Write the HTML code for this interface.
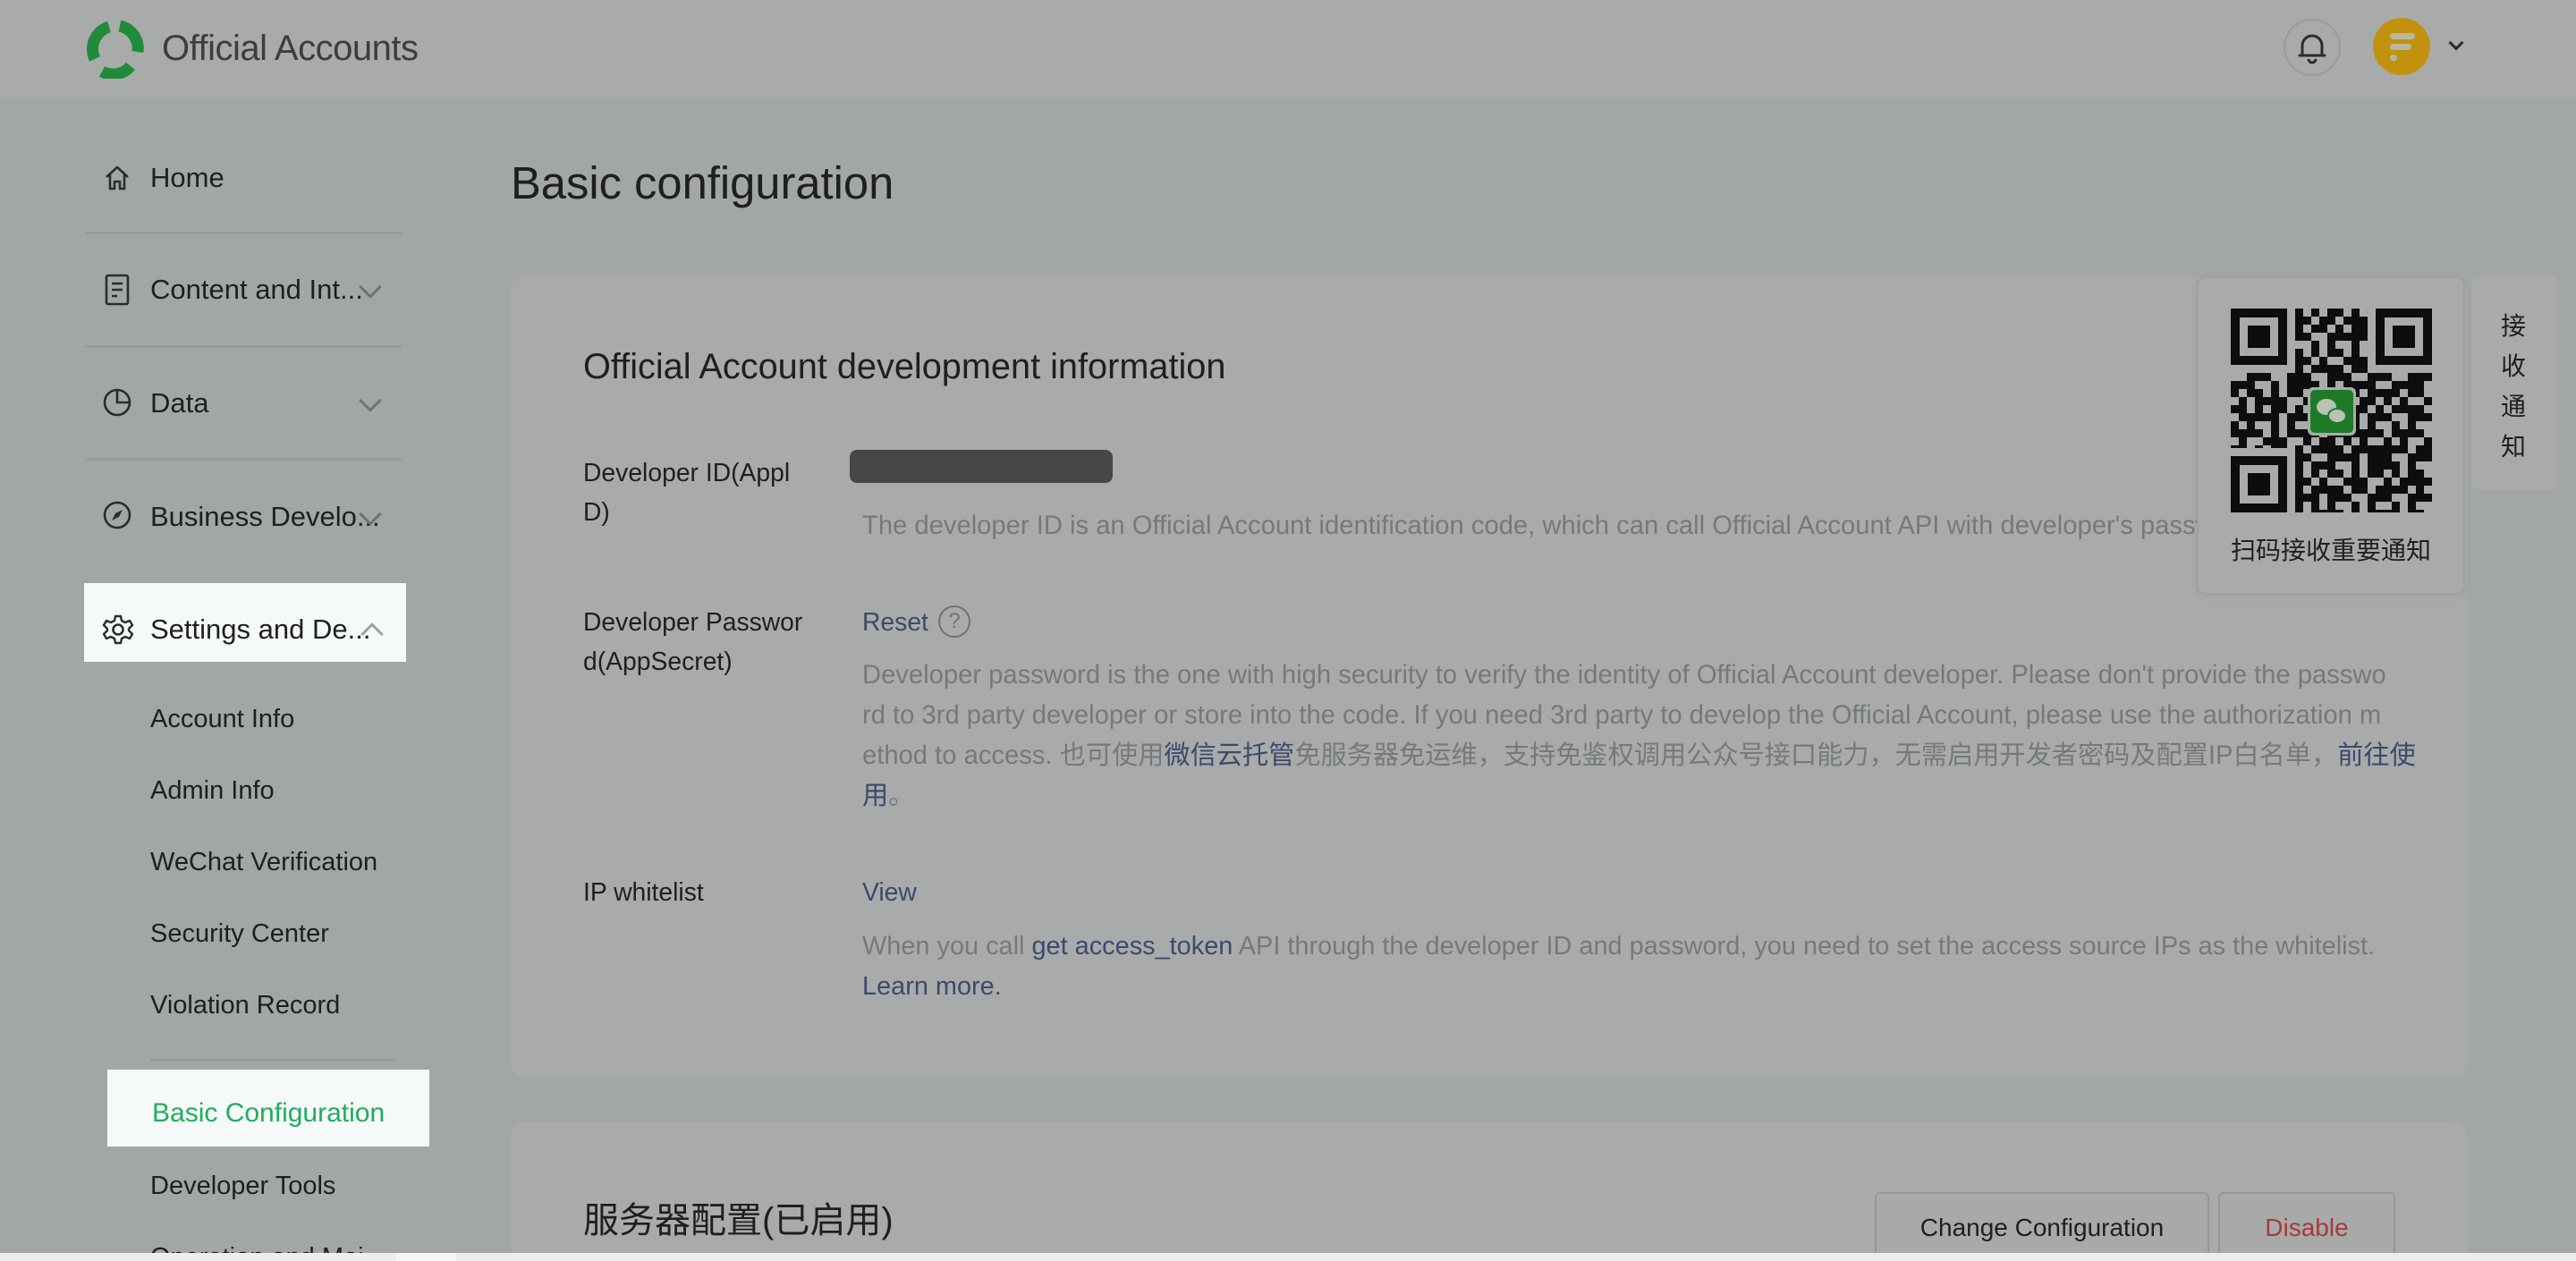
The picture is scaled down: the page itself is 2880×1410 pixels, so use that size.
<!DOCTYPE html>
<html style="width:2880px;height:1410px;overflow:hidden"><head><meta charset="utf-8">
<style>
*{margin:0;padding:0;box-sizing:border-box}
body{width:2880px;height:1410px;overflow:hidden;background:#a2a6a7;font-family:"Liberation Sans","Noto Sans CJK SC",sans-serif;color:#1e1f1f;position:relative}
.abs{position:absolute;white-space:nowrap}
.hdr{position:absolute;left:0;top:0;width:2880px;height:110px;background:#a9abaa}
.side{font-size:31px;line-height:1}
.sub{font-size:29px;line-height:1}
.div{position:absolute;height:3px;background:#979b9c}
.card{position:absolute;background:#a9abab;border-radius:16px}
.lbl{font-size:28.3px;line-height:44px}
.desc{font-size:29.2px;line-height:45px;color:#75797a}
.lnk{color:#3a4a6b}
.chev{position:absolute;width:18px;height:18px;border-right:3px solid #6f7374;border-bottom:3px solid #6f7374;transform:rotate(45deg)}
</style></head><body>
<div class="hdr"></div>
<svg class="abs" style="left:92px;top:20px" width="72" height="68" viewBox="0 0 72 68">
<g fill="none" stroke="#1f8b3b" stroke-width="13">
<path d="M14 46 A26 26 0 0 1 30 10"/>
<path d="M42 9 A26 26 0 0 1 62 38"/>
<path d="M54 54 A26 26 0 0 1 22 60"/>
</g></svg>
<div class="abs" style="left:181px;top:32px;font-size:40px;color:#3c3e3e;letter-spacing:-0.5px">Official Accounts</div>
<div class="abs" style="left:2553px;top:21px;width:64px;height:64px;border:2px solid #999c9c;border-radius:50%"></div>
<svg class="abs" style="left:2568px;top:34px" width="34" height="38" viewBox="0 0 34 38"><path d="M6 28 V17 A11 11 0 0 1 28 17 V28 H31 H3 Z M13 32 A4 4 0 0 0 21 32" fill="none" stroke="#2b2c2c" stroke-width="3" stroke-linejoin="round"/></svg>
<div class="abs" style="left:2653px;top:20px;width:64px;height:64px;border-radius:50%;background:#c2920f"></div>
<div class="abs" style="left:2672px;top:37px;width:28px;height:7px;border-radius:4px;background:#b8b89f"></div>
<div class="abs" style="left:2672px;top:49px;width:24px;height:7px;border-radius:4px;background:#b8b89f"></div>
<div class="abs" style="left:2672px;top:61px;width:8px;height:7px;border-radius:4px;background:#b8b89f"></div>
<div class="chev" style="left:2740px;top:42px;width:12px;height:12px;border-color:#2b2c2c"></div>

<svg class="abs" style="left:115px;top:183px" width="32" height="32" viewBox="0 0 32 32"><path d="M4 15 L16 4 L28 15 M8 12 V28 H13 V20 H19 V28 H24 V12" fill="none" stroke="#2b2c2c" stroke-width="2.6" stroke-linejoin="round"/></svg>
<div class="abs side" style="left:168px;top:183px">Home</div>
<div class="div" style="left:96px;top:259px;width:354px"></div>
<svg class="abs" style="left:116px;top:306px" width="30" height="36" viewBox="0 0 30 36"><rect x="3" y="2" width="24" height="32" rx="2" fill="none" stroke="#2b2c2c" stroke-width="2.6"/><path d="M9 11H21M9 18H21M9 25H15" stroke="#2b2c2c" stroke-width="2.6"/></svg>
<div class="abs side" style="left:168px;top:308px">Content and Int...</div>
<div class="chev" style="left:405px;top:312px"></div>
<div class="div" style="left:96px;top:386px;width:354px"></div>
<svg class="abs" style="left:114px;top:433px" width="34" height="34" viewBox="0 0 34 34"><circle cx="17" cy="17" r="14" fill="none" stroke="#2b2c2c" stroke-width="2.6"/><path d="M17 3V17H31" fill="none" stroke="#2b2c2c" stroke-width="2.6"/></svg>
<div class="abs side" style="left:168px;top:435px">Data</div>
<div class="chev" style="left:405px;top:439px"></div>
<div class="div" style="left:96px;top:512px;width:354px"></div>
<svg class="abs" style="left:114px;top:559px" width="34" height="34" viewBox="0 0 34 34"><circle cx="17" cy="17" r="14" fill="none" stroke="#2b2c2c" stroke-width="2.6"/><path d="M23 11L19 19L11 23L15 15Z" fill="#2b2c2c"/></svg>
<div class="abs side" style="left:168px;top:562px">Business Develo...</div>
<div class="chev" style="left:405px;top:566px"></div>
<div class="abs" style="left:94px;top:652px;width:360px;height:88px;background:#f5f9fa"></div>
<svg class="abs" style="left:114px;top:686px" width="36" height="36" viewBox="0 0 36 36"><circle cx="18" cy="18" r="5.5" fill="none" stroke="#2b2c2c" stroke-width="2.6"/><path d="M15 3H21L22 8L26 10L31 8L34 13L30 17V19L34 23L31 28L26 26L22 28L21 33H15L14 28L10 26L5 28L2 23L6 19V17L2 13L5 8L10 10L14 8Z" fill="none" stroke="#2b2c2c" stroke-width="2.4" stroke-linejoin="round"/></svg>
<div class="abs side" style="left:168px;top:688px">Settings and De...</div>
<div class="chev" style="left:407px;top:700px;transform:rotate(225deg);border-color:#a0a4a5"></div>
<div class="abs sub" style="left:168px;top:790px">Account Info</div>
<div class="abs sub" style="left:168px;top:870px">Admin Info</div>
<div class="abs sub" style="left:168px;top:950px">WeChat Verification</div>
<div class="abs sub" style="left:168px;top:1030px">Security Center</div>
<div class="abs sub" style="left:168px;top:1110px">Violation Record</div>
<div class="div" style="left:168px;top:1184px;width:274px"></div>
<div class="abs" style="left:120px;top:1196px;width:360px;height:86px;background:#f5f9fa"></div>
<div class="abs sub" style="left:170px;top:1230px;color:#1fae5b;font-size:30px">Basic Configuration</div>
<div class="abs sub" style="left:168px;top:1312px">Developer Tools</div>
<div class="abs sub" style="left:168px;top:1392px">Operation and Mai...</div>

<div class="abs" style="left:571px;top:175px;font-size:50.7px">Basic configuration</div>
<div class="card" style="left:571px;top:309px;width:2188px;height:896px"></div>
<div class="abs" style="left:652px;top:388px;font-size:39.7px">Official Account development information</div>
<div class="abs lbl" style="left:652px;top:506px">Developer ID(Appl<br>D)</div>
<div class="abs" style="left:950px;top:503px;width:294px;height:37px;border-radius:8px;background:#464747"></div>
<div class="abs desc" style="left:964px;top:566px">The developer ID is an Official Account identification code, which can call Official Account API with developer's password.</div>
<div class="abs lbl" style="left:652px;top:673px">Developer Passwor<br>d(AppSecret)</div>
<div class="abs lbl lnk" style="left:964px;top:673px">Reset</div>
<div class="abs" style="left:1049px;top:677px;width:36px;height:36px;border:2.5px solid #6f7374;border-radius:50%;font-size:24px;line-height:31px;text-align:center;color:#6f7374">?</div>
<div class="abs desc" style="left:964px;top:733px">Developer password is the one with high security to verify the identity of Official Account developer. Please don't provide the passwo<br>rd to 3rd party developer or store into the code. If you need 3rd party to develop the Official Account, please use the authorization m<br>ethod to access. 也可使用<span class="lnk">微信云托管</span>免服务器免运维，支持免鉴权调用公众号接口能力，无需启用开发者密码及配置IP白名单，<span class="lnk">前往使</span><br><span class="lnk">用</span>。</div>
<div class="abs lbl" style="left:652px;top:975px">IP whitelist</div>
<div class="abs lbl lnk" style="left:964px;top:975px">View</div>
<div class="abs desc" style="left:964px;top:1036px;font-size:28.9px">When you call <span class="lnk">get access_token</span> API through the developer ID and password, you need to set the access source IPs as the whitelist.<br><span class="lnk">Learn more.</span></div>

<div class="card" style="left:571px;top:1254px;width:2188px;height:156px;border-radius:16px 16px 0 0"></div>
<div class="abs" style="left:652px;top:1332px;font-size:40px">服务器配置(已启用)</div>
<div class="abs" style="left:2096px;top:1333px;width:374px;height:77px;border:2px solid #949898;border-bottom:none;border-radius:6px 6px 0 0;background:#a8aaaa;font-size:28px;text-align:center;padding-top:22px">Change Configuration</div>
<div class="abs" style="left:2480px;top:1333px;width:198px;height:77px;border:2px solid #949898;border-bottom:none;border-radius:6px 6px 0 0;background:#a8aaaa;font-size:28px;text-align:center;padding-top:22px;color:#a8393a">Disable</div>

<div class="abs" style="left:2456px;top:309px;width:300px;height:356px;background:#a9abab;border:2px solid #9ea2a3;border-radius:10px;box-shadow:0 2px 8px rgba(0,0,0,.08)"></div>
<svg class="abs" style="left:2494px;top:345px" width="225" height="228" viewBox="0 0 225 228">
<defs><pattern id="q" width="45" height="45" patternUnits="userSpaceOnUse">
<path d="M0 0h9v9h-9zM18 0h18v9h-18zM9 9h9v9h-9zM36 9h9v9h-9zM0 18h18v9h-18zM27 18h9v9h-9zM18 27h27v9h-27zM0 36h9v9h-9zM18 36h9v9h-9z" fill="#0d0d0d"/></pattern>
<pattern id="q2" width="63" height="54" patternUnits="userSpaceOnUse">
<path d="M9 0h9v18h-9zM36 9h18v9h-18zM0 27h27v9h-27zM45 36h9v18h-9zM27 45h9v9h-9z" fill="#0d0d0d"/></pattern></defs>
<rect width="225" height="228" fill="url(#q)"/>
<rect width="225" height="228" fill="url(#q2)"/>
<g fill="#a9abab"><rect x="0" y="0" width="72" height="72"/><rect x="153" y="0" width="72" height="72"/><rect x="0" y="156" width="72" height="72"/></g>
<g fill="none" stroke="#0d0d0d" stroke-width="10"><rect x="5" y="5" width="53" height="53"/><rect x="167" y="5" width="53" height="53"/><rect x="5" y="170" width="53" height="53"/></g>
<g fill="#0d0d0d"><rect x="19" y="19" width="25" height="25"/><rect x="181" y="19" width="25" height="25"/><rect x="19" y="184" width="25" height="25"/></g>
<rect x="86" y="88" width="54" height="54" rx="6" fill="#a9abab"/>
<rect x="89" y="91" width="48" height="48" rx="5" fill="#1f7a28"/>
<ellipse cx="107" cy="110" rx="11" ry="9" fill="#b9c2b6"/><ellipse cx="119" cy="120" rx="10" ry="8" fill="#b9c2b6" stroke="#1f7a28" stroke-width="2"/>
</svg>
<div class="abs" style="left:2494px;top:594px;font-size:28px">扫码接收重要通知</div>
<div class="abs" style="left:2764px;top:309px;width:94px;height:238px;background:#a9abab;border-radius:6px"></div>
<div class="abs" style="left:2796px;top:342px;font-size:28px;line-height:45px;width:30px;white-space:normal">接收通知</div>

<div class="abs" style="left:0;top:1401px;width:2880px;height:9px;background:#eeeeee"></div>
<div class="abs" style="left:443px;top:1401px;width:67px;height:9px;background:#f6f6f6"></div>
</body></html>
